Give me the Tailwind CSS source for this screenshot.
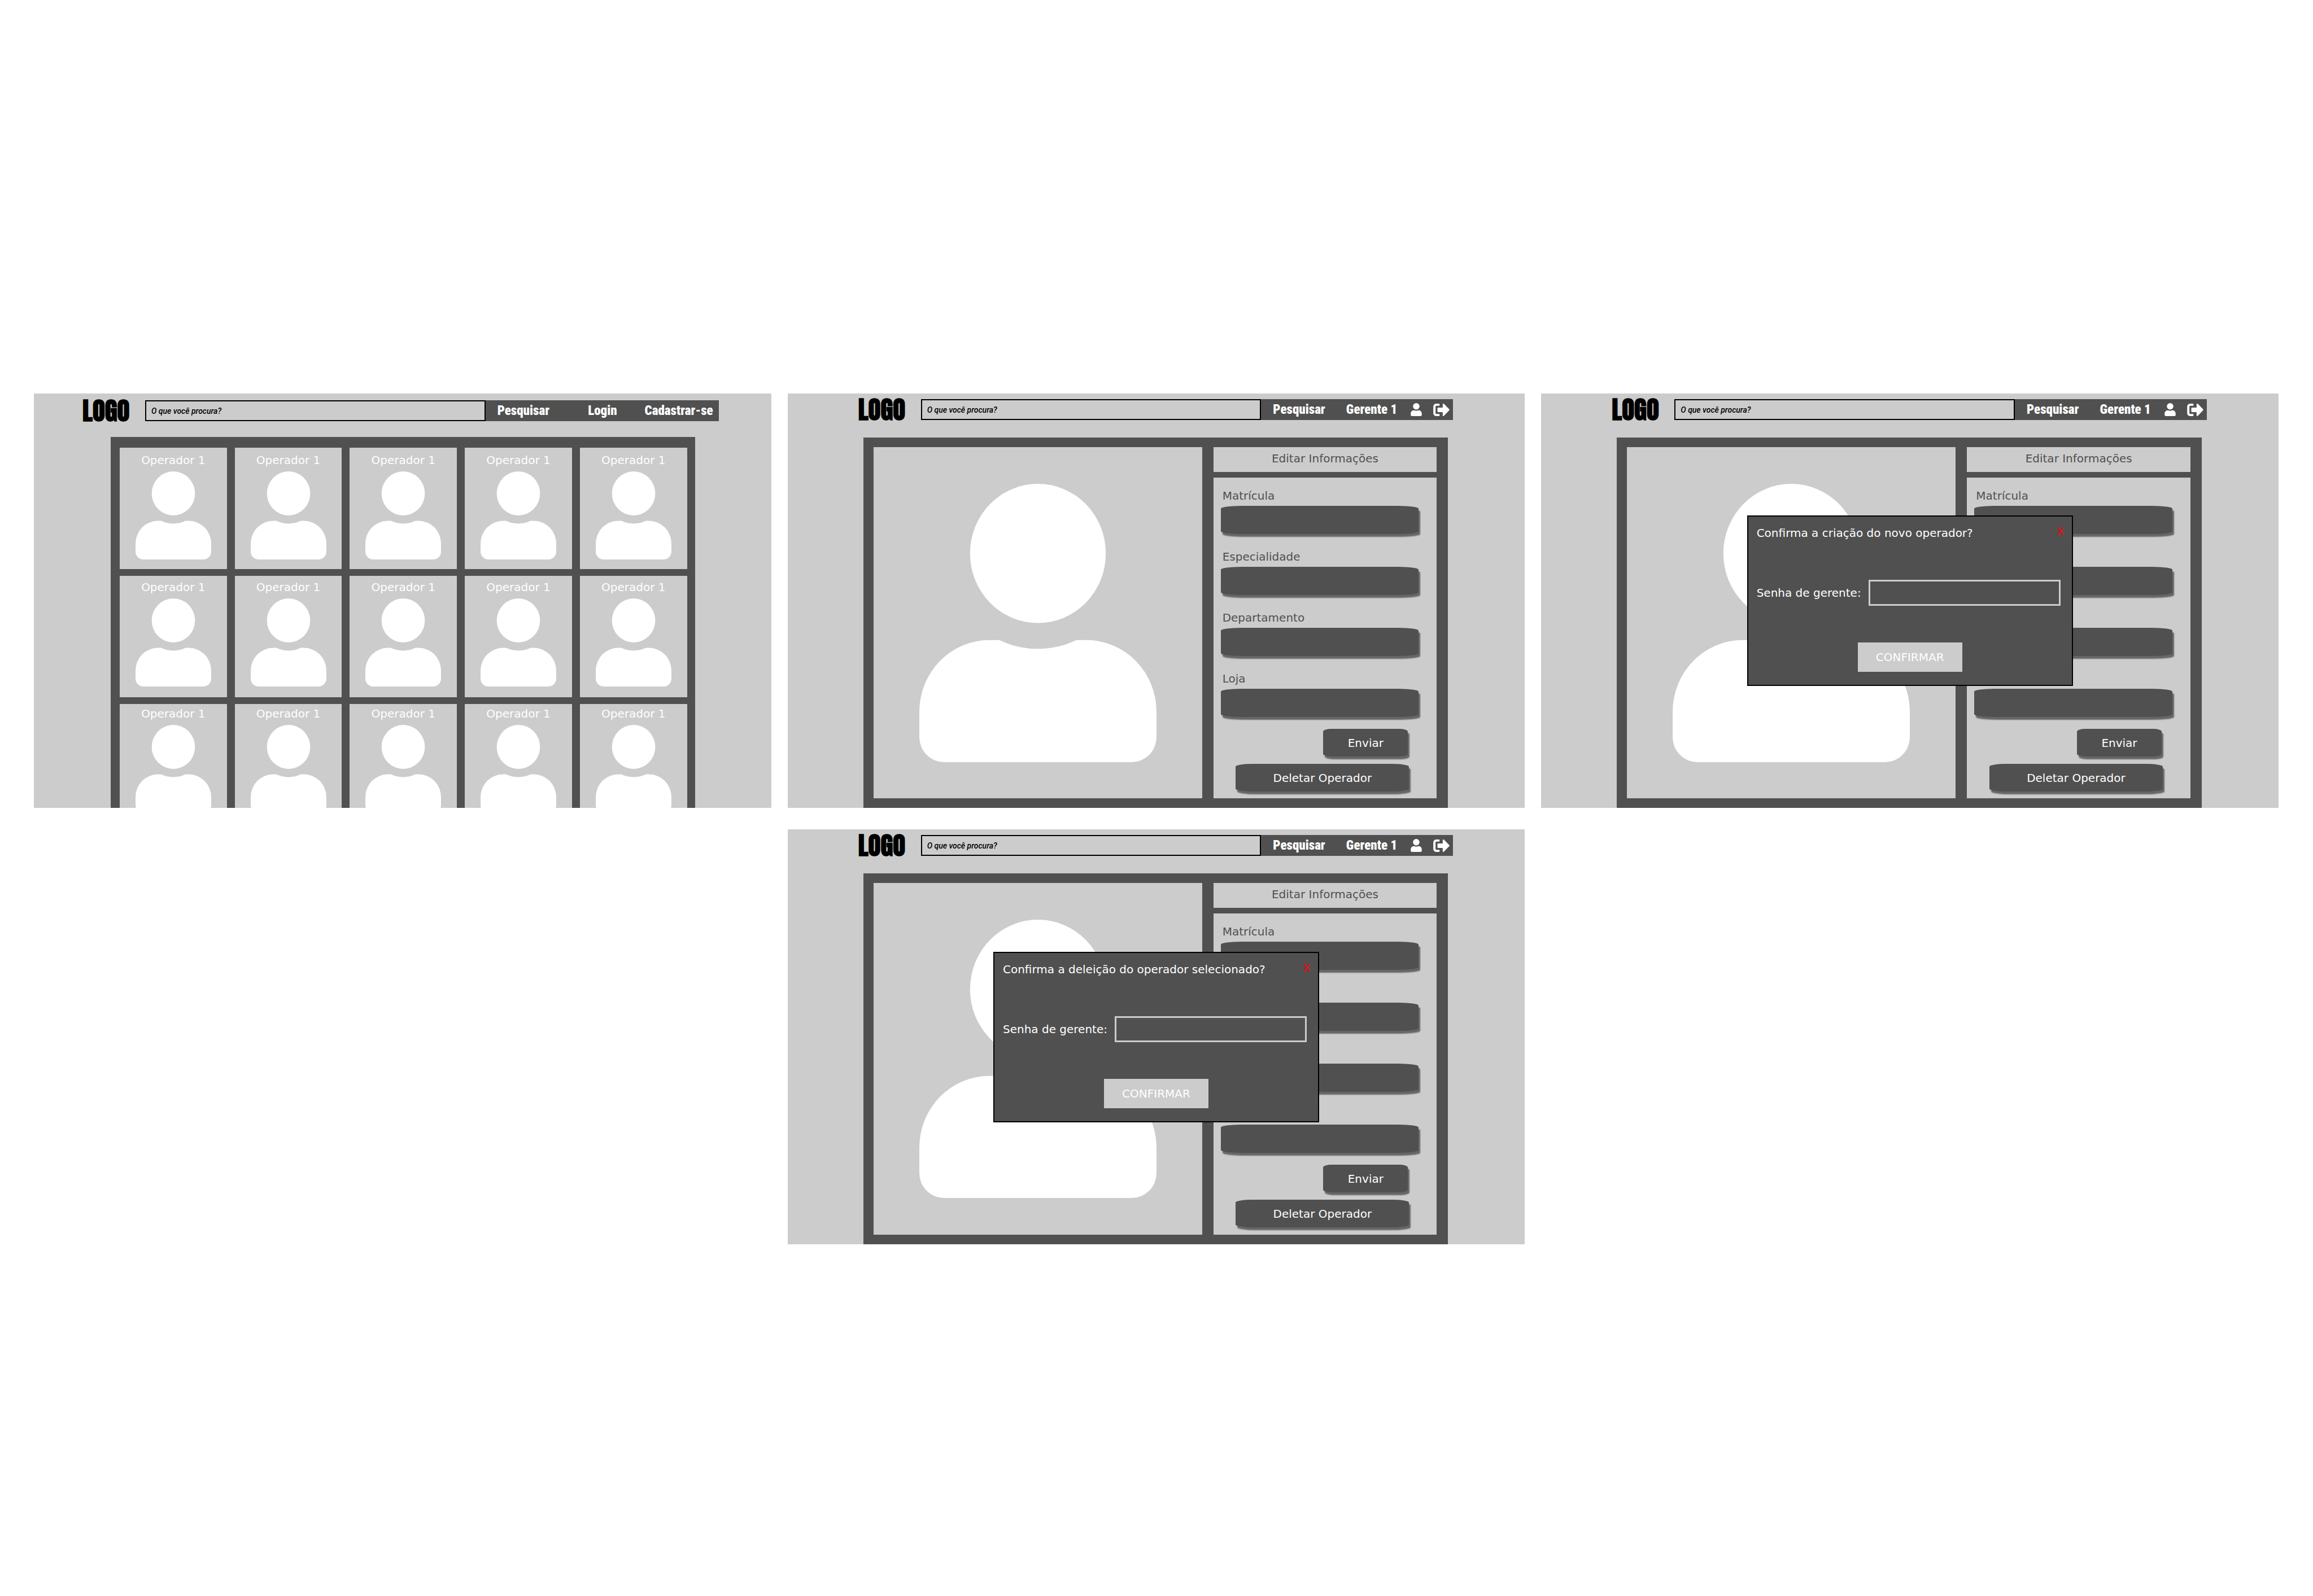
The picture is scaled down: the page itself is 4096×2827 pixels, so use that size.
<!DOCTYPE html>
<html lang="pt-BR">
<head>
<meta charset="utf-8">
<title>Operadores</title>
<script src="https://cdn.jsdelivr.net/npm/@tailwindcss/browser@4"></script>
</head>
<body class="bg-white font-['DejaVu_Sans',sans-serif] text-[20px] leading-[28px]">

<!-- Shared symbols -->
<svg class="hidden">
  <symbol id="avatar" viewBox="0 0 617 725" preserveAspectRatio="none">
    <ellipse cx="308.5" cy="181.3" rx="176.6" ry="181.3"/>
    <path d="M182 407H208.5A230 230 0 0 0 408.5 407H435A182 187 0 0 1 617 594V660A65 65 0 0 1 552 725H65A65 65 0 0 1 0 660V594A182 187 0 0 1 182 407Z"/>
  </symbol>
  <symbol id="user" viewBox="0 0 87 102">
    <circle cx="43.5" cy="25.5" r="25.5"/>
    <path d="M25 57Q43.500 64 62 57C78 57 87 70 87 85V92a10 10 0 0 1-10 10H10a10 10 0 0 1-10-10V85C0 70 9 57 25 57Z"/>
  </symbol>
  <symbol id="logout" viewBox="0 0 129 99">
    <path d="M46 0H24A24 24 0 0 0 0 24V75A24 24 0 0 0 24 99H46q4 0 4-4V86q0-4-4-4H24q-6 0-6-6V23q0-6 6-6H46q4 0 4-4V4q0-4-4-4Z"/>
    <path d="M39 32H75V6C75 0 82-2 86 2L127 45q3 4 0 8L86 96C82 101 75 99 75 93V68H39q-6 0-6-6V38q0-6 6-6Z"/>
  </symbol>
</svg>

<main class="grid grid-cols-3 gap-x-[29px] gap-y-[38px] pt-[697px] pl-[60px] pr-[61px]">

  <!-- Operator list -->
  <section class="flex aspect-video flex-col overflow-hidden bg-[#ccc]">
    <header class="flex h-[77px] shrink-0 items-center pt-[4px] pb-[20px] pl-[86px] pr-[93px]">
      <a href="#" class="w-[111px] shrink-0 font-['Anton','Roboto_Condensed',sans-serif] text-[45px] font-black leading-[53px] text-black">LOGO</a>
      <input type="search" aria-label="Buscar" placeholder="O que você procura?" class="h-[37px] min-w-0 flex-1 border-2 border-black px-[9px] font-[Roboto,sans-serif] text-[14px] font-medium italic placeholder:text-black">
      <nav class="flex h-[37px] w-[413px] shrink-0 items-center bg-[#505050] pl-[21px] font-['Roboto_Condensed',Roboto,sans-serif] text-[23px] font-black whitespace-nowrap text-white">
        <a href="#">Pesquisar</a><a href="#" class="ml-[68px]">Login</a><a href="#" class="ml-[49px]">Cadastrar-se</a>
      </nav>
    </header>
    <div class="ml-[136px] mr-[135px] grid min-h-0 flex-1 grid-cols-5 content-start gap-x-[14px] gap-y-[12px] overflow-hidden bg-[#505050] pt-[19px] pl-[16px] pr-[14px] text-center text-white">
      <a href="#" class="h-[215px] bg-[#ccc] pt-[8px]">Operador 1<svg class="mx-auto mt-[6px] h-[156px] w-[134px] fill-white"><use href="#avatar"/></svg></a>
      <a href="#" class="h-[215px] bg-[#ccc] pt-[8px]">Operador 1<svg class="mx-auto mt-[6px] h-[156px] w-[134px] fill-white"><use href="#avatar"/></svg></a>
      <a href="#" class="h-[215px] bg-[#ccc] pt-[8px]">Operador 1<svg class="mx-auto mt-[6px] h-[156px] w-[134px] fill-white"><use href="#avatar"/></svg></a>
      <a href="#" class="h-[215px] bg-[#ccc] pt-[8px]">Operador 1<svg class="mx-auto mt-[6px] h-[156px] w-[134px] fill-white"><use href="#avatar"/></svg></a>
      <a href="#" class="h-[215px] bg-[#ccc] pt-[8px]">Operador 1<svg class="mx-auto mt-[6px] h-[156px] w-[134px] fill-white"><use href="#avatar"/></svg></a>
      <a href="#" class="h-[215px] bg-[#ccc] pt-[6px]">Operador 1<svg class="mx-auto mt-[6px] h-[156px] w-[134px] fill-white"><use href="#avatar"/></svg></a>
      <a href="#" class="h-[215px] bg-[#ccc] pt-[6px]">Operador 1<svg class="mx-auto mt-[6px] h-[156px] w-[134px] fill-white"><use href="#avatar"/></svg></a>
      <a href="#" class="h-[215px] bg-[#ccc] pt-[6px]">Operador 1<svg class="mx-auto mt-[6px] h-[156px] w-[134px] fill-white"><use href="#avatar"/></svg></a>
      <a href="#" class="h-[215px] bg-[#ccc] pt-[6px]">Operador 1<svg class="mx-auto mt-[6px] h-[156px] w-[134px] fill-white"><use href="#avatar"/></svg></a>
      <a href="#" class="h-[215px] bg-[#ccc] pt-[6px]">Operador 1<svg class="mx-auto mt-[6px] h-[156px] w-[134px] fill-white"><use href="#avatar"/></svg></a>
      <a href="#" class="h-[215px] bg-[#ccc] pt-[3px]">Operador 1<svg class="mx-auto mt-[6px] h-[156px] w-[134px] fill-white"><use href="#avatar"/></svg></a>
      <a href="#" class="h-[215px] bg-[#ccc] pt-[3px]">Operador 1<svg class="mx-auto mt-[6px] h-[156px] w-[134px] fill-white"><use href="#avatar"/></svg></a>
      <a href="#" class="h-[215px] bg-[#ccc] pt-[3px]">Operador 1<svg class="mx-auto mt-[6px] h-[156px] w-[134px] fill-white"><use href="#avatar"/></svg></a>
      <a href="#" class="h-[215px] bg-[#ccc] pt-[3px]">Operador 1<svg class="mx-auto mt-[6px] h-[156px] w-[134px] fill-white"><use href="#avatar"/></svg></a>
      <a href="#" class="h-[215px] bg-[#ccc] pt-[3px]">Operador 1<svg class="mx-auto mt-[6px] h-[156px] w-[134px] fill-white"><use href="#avatar"/></svg></a>
    </div>
  </section>

  <!-- Edit operator -->
  <section class="flex aspect-video flex-col overflow-hidden bg-[#ccc]">
    <header class="flex h-[78px] shrink-0 items-center pt-[2px] pb-[23px] pl-[125px] pr-[127px]">
      <a href="#" class="w-[111px] shrink-0 font-['Anton','Roboto_Condensed',sans-serif] text-[45px] font-black leading-[53px] text-black">LOGO</a>
      <input type="search" aria-label="Buscar" placeholder="O que você procura?" class="h-[37px] min-w-0 flex-1 border-2 border-black px-[9px] font-[Roboto,sans-serif] text-[14px] font-medium italic placeholder:text-black">
      <nav class="flex h-[37px] w-[340px] shrink-0 items-center bg-[#505050] pl-[21px] pr-[6px] font-['Roboto_Condensed',Roboto,sans-serif] text-[23px] font-black whitespace-nowrap text-white">
        <a href="#">Pesquisar</a><a href="#" class="ml-[37px]">Gerente 1</a>
        <a href="#" aria-label="Perfil" class="ml-auto"><svg class="h-[23px] w-[20px] fill-white"><use href="#user"/></svg></a>
        <a href="#" aria-label="Sair" class="ml-[20px]"><svg class="h-[22px] w-[29px] fill-white"><use href="#logout"/></svg></a>
      </nav>
    </header>
    <div class="ml-[134px] mr-[136px] grid min-h-0 flex-1 grid-cols-[581fr_395fr] gap-x-[20px] bg-[#505050] pt-[17px] pb-[17px] pl-[18px] pr-[20px]">
      <div class="flex items-center justify-center bg-[#ccc]"><svg class="h-[493px] w-[420px] fill-white"><use href="#avatar"/></svg></div>
      <div class="flex flex-col gap-[10px] text-[#505050]">
        <h2 class="flex h-[44px] items-center justify-center bg-[#ccc] pb-[5px]">Editar Informações</h2>
        <form class="flex flex-1 flex-col bg-[#ccc] pt-[18px] pl-[13px] pr-[32px]">
          <div class="flex flex-col gap-[26px]">
            <div class="flex flex-col gap-[4px]"><label for="a1" class="pl-[3px]">Matrícula</label><input id="a1" type="text" class="h-[50px] w-full rounded-[10%] bg-[#505050] px-4 text-white shadow-[3px_5px_2px_#666]"></div>
            <div class="flex flex-col gap-[4px]"><label for="a2" class="pl-[3px]">Especialidade</label><input id="a2" type="text" class="h-[50px] w-full rounded-[10%] bg-[#505050] px-4 text-white shadow-[3px_5px_2px_#666]"></div>
            <div class="flex flex-col gap-[4px]"><label for="a3" class="pl-[3px]">Departamento</label><input id="a3" type="text" class="h-[50px] w-full rounded-[10%] bg-[#505050] px-4 text-white shadow-[3px_5px_2px_#666]"></div>
            <div class="flex flex-col gap-[4px]"><label for="a4" class="pl-[3px]">Loja</label><input id="a4" type="text" class="h-[50px] w-full rounded-[10%] bg-[#505050] px-4 text-white shadow-[3px_5px_2px_#666]"></div>
          </div>
          <div class="mt-[21px] flex flex-col items-end gap-[13px] pr-[17px] text-white">
            <button type="button" class="mr-[2px] h-[49px] w-[150px] rounded-[10%] bg-[#505050] shadow-[3px_5px_2px_#666]">Enviar</button>
            <button type="button" class="h-[49px] w-[307px] rounded-[10%] bg-[#505050] shadow-[3px_5px_2px_#666]">Deletar Operador</button>
          </div>
        </form>
      </div>
    </div>
  </section>

  <!-- Confirm creation -->
  <section class="relative flex aspect-video flex-col overflow-hidden bg-[#ccc]">
    <header class="flex h-[78px] shrink-0 items-center pt-[2px] pb-[23px] pl-[125px] pr-[127px]">
      <a href="#" class="w-[111px] shrink-0 font-['Anton','Roboto_Condensed',sans-serif] text-[45px] font-black leading-[53px] text-black">LOGO</a>
      <input type="search" aria-label="Buscar" placeholder="O que você procura?" class="h-[37px] min-w-0 flex-1 border-2 border-black px-[9px] font-[Roboto,sans-serif] text-[14px] font-medium italic placeholder:text-black">
      <nav class="flex h-[37px] w-[340px] shrink-0 items-center bg-[#505050] pl-[21px] pr-[6px] font-['Roboto_Condensed',Roboto,sans-serif] text-[23px] font-black whitespace-nowrap text-white">
        <a href="#">Pesquisar</a><a href="#" class="ml-[37px]">Gerente 1</a>
        <a href="#" aria-label="Perfil" class="ml-auto"><svg class="h-[23px] w-[20px] fill-white"><use href="#user"/></svg></a>
        <a href="#" aria-label="Sair" class="ml-[20px]"><svg class="h-[22px] w-[29px] fill-white"><use href="#logout"/></svg></a>
      </nav>
    </header>
    <div class="ml-[134px] mr-[136px] grid min-h-0 flex-1 grid-cols-[581fr_395fr] gap-x-[20px] bg-[#505050] pt-[17px] pb-[17px] pl-[18px] pr-[20px]">
      <div class="flex items-center justify-center bg-[#ccc]"><svg class="h-[493px] w-[420px] fill-white"><use href="#avatar"/></svg></div>
      <div class="flex flex-col gap-[10px] text-[#505050]">
        <h2 class="flex h-[44px] items-center justify-center bg-[#ccc] pb-[5px]">Editar Informações</h2>
        <form class="flex flex-1 flex-col bg-[#ccc] pt-[18px] pl-[13px] pr-[32px]">
          <div class="flex flex-col gap-[26px]">
            <div class="flex flex-col gap-[4px]"><label for="b1" class="pl-[3px]">Matrícula</label><input id="b1" type="text" class="h-[50px] w-full rounded-[10%] bg-[#505050] px-4 text-white shadow-[3px_5px_2px_#666]"></div>
            <div class="flex flex-col gap-[4px] pt-[32px]"><input type="text" aria-label="Especialidade" class="h-[50px] w-full rounded-[10%] bg-[#505050] px-4 text-white shadow-[3px_5px_2px_#666]"></div>
            <div class="flex flex-col gap-[4px] pt-[32px]"><input type="text" aria-label="Departamento" class="h-[50px] w-full rounded-[10%] bg-[#505050] px-4 text-white shadow-[3px_5px_2px_#666]"></div>
            <div class="flex flex-col gap-[4px] pt-[32px]"><input type="text" aria-label="Loja" class="h-[50px] w-full rounded-[10%] bg-[#505050] px-4 text-white shadow-[3px_5px_2px_#666]"></div>
          </div>
          <div class="mt-[21px] flex flex-col items-end gap-[13px] pr-[17px] text-white">
            <button type="button" class="mr-[2px] h-[49px] w-[150px] rounded-[10%] bg-[#505050] shadow-[3px_5px_2px_#666]">Enviar</button>
            <button type="button" class="h-[49px] w-[307px] rounded-[10%] bg-[#505050] shadow-[3px_5px_2px_#666]">Deletar Operador</button>
          </div>
        </form>
      </div>
    </div>
    <div class="absolute inset-0 flex items-center justify-center">
      <div role="dialog" class="flex w-[577px] flex-col border-2 border-black bg-[#505050] pt-[12px] pb-[23px] pl-[15px] pr-[20px] text-white">
        <div class="flex items-start justify-between">
          <h3 class="mt-[3px]">Confirma a criação do novo operador?</h3>
          <button type="button" aria-label="Fechar" class="-mr-[7px] text-[#f00]">X</button>
        </div>
        <div class="mt-[69px] flex items-center justify-between">
          <label for="b5">Senha de gerente:</label>
          <input id="b5" type="password" class="h-[46px] w-[340px] border-[3px] border-[#ccc] px-2">
        </div>
        <button type="button" class="mt-[65px] ml-[5px] h-[52px] w-[185px] self-center bg-[#ccc]">CONFIRMAR</button>
      </div>
    </div>
  </section>

  <!-- Confirm deletion -->
  <section class="relative col-start-2 flex aspect-video flex-col overflow-hidden bg-[#ccc]">
    <header class="flex h-[78px] shrink-0 items-center pt-[2px] pb-[23px] pl-[125px] pr-[127px]">
      <a href="#" class="w-[111px] shrink-0 font-['Anton','Roboto_Condensed',sans-serif] text-[45px] font-black leading-[53px] text-black">LOGO</a>
      <input type="search" aria-label="Buscar" placeholder="O que você procura?" class="h-[37px] min-w-0 flex-1 border-2 border-black px-[9px] font-[Roboto,sans-serif] text-[14px] font-medium italic placeholder:text-black">
      <nav class="flex h-[37px] w-[340px] shrink-0 items-center bg-[#505050] pl-[21px] pr-[6px] font-['Roboto_Condensed',Roboto,sans-serif] text-[23px] font-black whitespace-nowrap text-white">
        <a href="#">Pesquisar</a><a href="#" class="ml-[37px]">Gerente 1</a>
        <a href="#" aria-label="Perfil" class="ml-auto"><svg class="h-[23px] w-[20px] fill-white"><use href="#user"/></svg></a>
        <a href="#" aria-label="Sair" class="ml-[20px]"><svg class="h-[22px] w-[29px] fill-white"><use href="#logout"/></svg></a>
      </nav>
    </header>
    <div class="ml-[134px] mr-[136px] grid min-h-0 flex-1 grid-cols-[581fr_395fr] gap-x-[20px] bg-[#505050] pt-[17px] pb-[17px] pl-[18px] pr-[20px]">
      <div class="flex items-center justify-center bg-[#ccc]"><svg class="h-[493px] w-[420px] fill-white"><use href="#avatar"/></svg></div>
      <div class="flex flex-col gap-[10px] text-[#505050]">
        <h2 class="flex h-[44px] items-center justify-center bg-[#ccc] pb-[5px]">Editar Informações</h2>
        <form class="flex flex-1 flex-col bg-[#ccc] pt-[18px] pl-[13px] pr-[32px]">
          <div class="flex flex-col gap-[26px]">
            <div class="flex flex-col gap-[4px]"><label for="c1" class="pl-[3px]">Matrícula</label><input id="c1" type="text" class="h-[50px] w-full rounded-[10%] bg-[#505050] px-4 text-white shadow-[3px_5px_2px_#666]"></div>
            <div class="flex flex-col gap-[4px] pt-[32px]"><input type="text" aria-label="Especialidade" class="h-[50px] w-full rounded-[10%] bg-[#505050] px-4 text-white shadow-[3px_5px_2px_#666]"></div>
            <div class="flex flex-col gap-[4px] pt-[32px]"><input type="text" aria-label="Departamento" class="h-[50px] w-full rounded-[10%] bg-[#505050] px-4 text-white shadow-[3px_5px_2px_#666]"></div>
            <div class="flex flex-col gap-[4px] pt-[32px]"><input type="text" aria-label="Loja" class="h-[50px] w-full rounded-[10%] bg-[#505050] px-4 text-white shadow-[3px_5px_2px_#666]"></div>
          </div>
          <div class="mt-[21px] flex flex-col items-end gap-[13px] pr-[17px] text-white">
            <button type="button" class="mr-[2px] h-[49px] w-[150px] rounded-[10%] bg-[#505050] shadow-[3px_5px_2px_#666]">Enviar</button>
            <button type="button" class="h-[49px] w-[307px] rounded-[10%] bg-[#505050] shadow-[3px_5px_2px_#666]">Deletar Operador</button>
          </div>
        </form>
      </div>
    </div>
    <div class="absolute inset-0 flex items-center justify-center">
      <div role="dialog" class="flex w-[577px] flex-col border-2 border-black bg-[#505050] pt-[12px] pb-[23px] pl-[15px] pr-[20px] text-white">
        <div class="flex items-start justify-between">
          <h3 class="mt-[3px]">Confirma a deleição do operador selecionado?</h3>
          <button type="button" aria-label="Fechar" class="-mr-[7px] text-[#f00]">X</button>
        </div>
        <div class="mt-[69px] flex items-center justify-between">
          <label for="c5">Senha de gerente:</label>
          <input id="c5" type="password" class="h-[46px] w-[340px] border-[3px] border-[#ccc] px-2">
        </div>
        <button type="button" class="mt-[65px] ml-[5px] h-[52px] w-[185px] self-center bg-[#ccc]">CONFIRMAR</button>
      </div>
    </div>
  </section>
</main>
</body>
</html>
